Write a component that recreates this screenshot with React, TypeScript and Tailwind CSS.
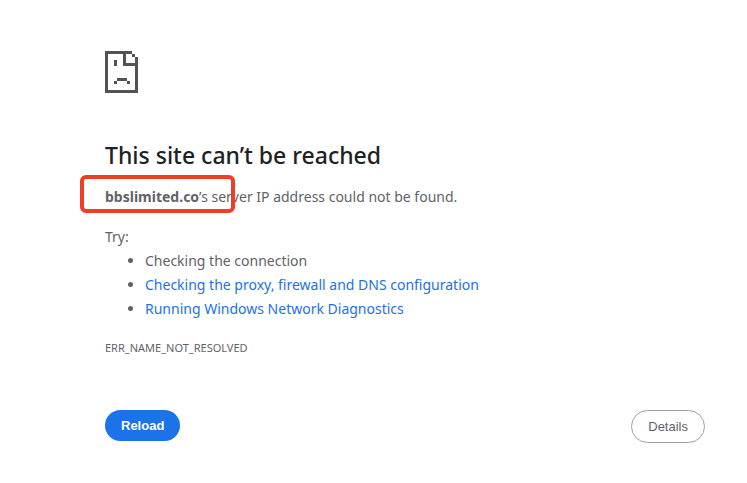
const suggestions = [
  { label: "Checking the connection" },
  { label: "Checking the proxy, firewall and DNS configuration", href: "#proxy" },
  { label: "Running Windows Network Diagnostics", href: "#diagnostics" },
];

function SadPageIcon() {
  return (
    <svg
      width="33"
      height="42"
      viewBox="0 0 33 42"
      fill="#535353"
      shapeRendering="crispEdges"
      aria-hidden="true"
    >
      {/* Sheet outline */}
      <path d="M0 0H27V3H3V39H30V6H33V42H0Z" />
      {/* Folded corner */}
      <path d="M18 3H21V12H30V15H18ZM27 3H30V6H27Z" />
      {/* Face */}
      <path d="M9 9H12V15H9ZM12 27H22V30H12ZM9 30H12V33H9ZM22 30H25V33H22Z" />
    </svg>
  );
}

export default function App() {
  return (
    <main className="min-h-screen bg-white pt-[51px] pr-[42px] pl-[105px] font-['Noto_Sans',sans-serif] text-sm leading-6 text-[#5f6368]">
      <div className="max-w-[600px]">
        <SadPageIcon />

        <h1 className="mt-12 text-[23px] leading-7 font-medium text-[#202124]">
          This site can’t be reached
        </h1>

        <p className="relative mt-4">
          <strong className="font-bold">bbslimited.co</strong>’s server IP address could not be found.
          {/* Highlight around the host name */}
          <span
            className="pointer-events-none absolute -top-[10px] -left-[25px] h-[38px] w-[155px] rounded-md border-4 border-[#ee3f24]"
            aria-hidden="true"
          />
        </p>

        <p className="mt-4">Try:</p>
        <ul className="list-disc pl-10">
          {suggestions.map((item) => (
            <li key={item.label}>
              {item.href ? (
                <a href={item.href} className="text-[#1a73e8]">
                  {item.label}
                </a>
              ) : (
                item.label
              )}
            </li>
          ))}
        </ul>

        <p className="mt-4 text-[11px] leading-[22px]">ERR_NAME_NOT_RESOLVED</p>

        <div className="mt-[51px] flex items-start justify-between font-['Liberation_Sans',sans-serif] text-[13px] leading-[15px]">
          <button type="button" className="rounded-full bg-[#1a73e8] px-4 py-2 font-bold text-white">
            Reload
          </button>
          <button type="button" className="rounded-full border border-[#9aa0a6] px-4 py-2">
            Details
          </button>
        </div>
      </div>
    </main>
  );
}
